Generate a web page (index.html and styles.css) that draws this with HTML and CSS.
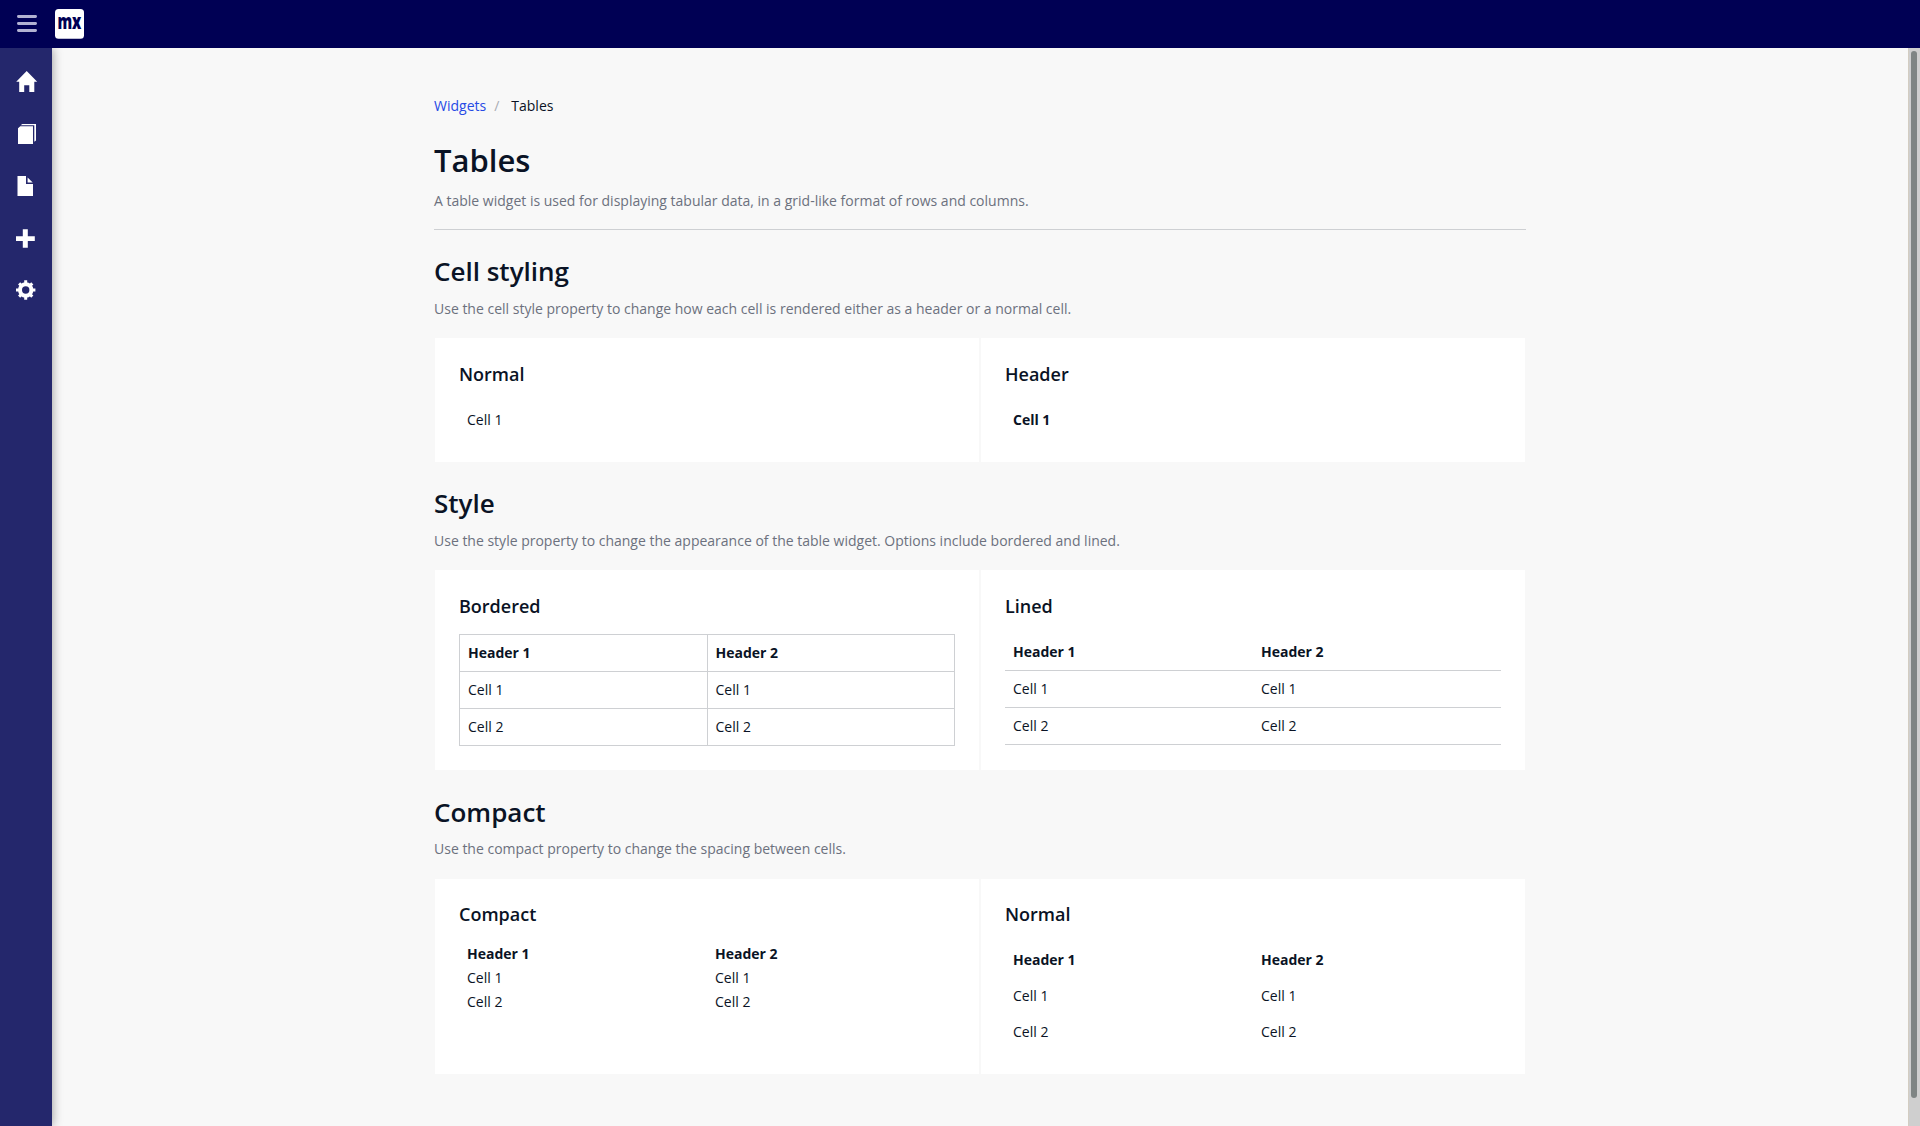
FILE: index.html
```html
<!DOCTYPE html>
<html lang="en">
<head>
<meta charset="utf-8">
<title>Tables</title>
<link rel="stylesheet" href="styles.css">
</head>
<body>
<header class="topbar">
  <svg class="menu-toggle" width="20" height="17" viewBox="0 0 20 17"><path d="M1.4 1.500h17.200M1.400 8.500h17.200M1.400 15.500h17.200" stroke="#b2b2d2" stroke-width="2.8" stroke-linecap="round"/></svg>
  <svg class="logo" width="29" height="30" viewBox="0 0 29 30"><rect width="29" height="29.7" rx="3.5" fill="#fff"/><text x="2.400" y="20.300" class="logo-text" textLength="24" lengthAdjust="spacingAndGlyphs">mx</text></svg>
</header>
<div class="layout">
  <nav class="sidebar">
    <svg width="22" height="22" viewBox="0 0 22 22"><path d="M10.700 0 21.200 10.800H18.300V21h-5v-6.800H8.200V21H3.200V10.800H.2z"/></svg>
    <svg width="22" height="22" viewBox="0 0 22 22"><path d="M4.300 3.300H17v17.700H2V5.300zM4.600 2.300 6.300 1H20V17.500l-1.700 1.300V2.300z"/></svg>
    <svg width="22" height="22" viewBox="0 0 22 22"><path d="M1.500 1H10v8h7v12H1.500zM11.600 2.500 16.700 7.600h-5.100z"/></svg>
    <svg width="22" height="22" viewBox="0 0 22 22"><path d="M6.800 2.200h5v7h7v4.900h-7v6.700h-5v-6.700H0V9.200h6.800z"/></svg>
    <svg width="22" height="22" viewBox="0 0 22 22"><circle cx="9.700" cy="11" r="5.700" fill="none" stroke="#fff" stroke-width="4"/><path d="M9.700 1.200v3M9.700 17.800v3M0 11h3M16.400 11h3M3.100 4.400l2 2M14.300 15.600l2 2M16.300 4.400l-2 2M5.100 15.600l-2 2" stroke="#fff" stroke-width="3"/></svg>
  </nav>
  <main class="content">
    <div class="page">
      <div class="breadcrumb"><a class="crumb-link">Widgets</a><span class="crumb-separator">/</span><span>Tables</span></div>
      <h1 class="page-title">Tables</h1>
      <p class="description">A table widget is used for displaying tabular data, in a grid-like format of rows and columns.</p>
      <hr class="rule">

      <h2 class="section-title">Cell styling</h2>
      <p class="description">Use the cell style property to change how each cell is rendered either as a header or a normal cell.</p>
      <div class="cards">
        <section class="card">
          <h4 class="card-title">Normal</h4>
          <table class="table"><tr><td>Cell 1</td></tr></table>
        </section>
        <section class="card">
          <h4 class="card-title">Header</h4>
          <table class="table"><tr><th>Cell 1</th></tr></table>
        </section>
      </div>

      <h2 class="section-title">Style</h2>
      <p class="description">Use the style property to change the appearance of the table widget. Options include bordered and lined.</p>
      <div class="cards">
        <section class="card">
          <h4 class="card-title">Bordered</h4>
          <table class="table table-bordered">
            <tr><th>Header 1</th><th>Header 2</th></tr>
            <tr><td>Cell 1</td><td>Cell 1</td></tr>
            <tr><td>Cell 2</td><td>Cell 2</td></tr>
          </table>
        </section>
        <section class="card">
          <h4 class="card-title">Lined</h4>
          <table class="table table-lined">
            <tr><th>Header 1</th><th>Header 2</th></tr>
            <tr><td>Cell 1</td><td>Cell 1</td></tr>
            <tr><td>Cell 2</td><td>Cell 2</td></tr>
          </table>
        </section>
      </div>

      <h2 class="section-title">Compact</h2>
      <p class="description">Use the compact property to change the spacing between cells.</p>
      <div class="cards">
        <section class="card">
          <h4 class="card-title">Compact</h4>
          <table class="table table-compact">
            <tr><th>Header 1</th><th>Header 2</th></tr>
            <tr><td>Cell 1</td><td>Cell 1</td></tr>
            <tr><td>Cell 2</td><td>Cell 2</td></tr>
          </table>
        </section>
        <section class="card">
          <h4 class="card-title">Normal</h4>
          <table class="table">
            <tr><th>Header 1</th><th>Header 2</th></tr>
            <tr><td>Cell 1</td><td>Cell 1</td></tr>
            <tr><td>Cell 2</td><td>Cell 2</td></tr>
          </table>
        </section>
      </div>
    </div>
  </main>
  <div class="scrollbar"><div class="scrollbar-thumb"></div></div>
</div>
</body>
</html>
```
FILE: styles.css
```css
* { box-sizing: border-box; }

body {
  margin: 0;
  height: 1126px;
  display: flex;
  flex-direction: column;
  overflow: hidden;
  background: #f8f8f8;
  color: #0a1325;
  font: 14px/20px "Open Sans", sans-serif;
}

h1, h2, h4, p { margin: 0; }

.topbar {
  flex: none;
  height: 48px;
  display: flex;
  align-items: flex-start;
  gap: 18px;
  padding: 9px 17px;
  background: #000054;
}
.menu-toggle { margin-top: 5.5px; }
.logo { overflow: visible; }
.logo-text {
  font: 800 20.5px "Open Sans", sans-serif;
  fill: #000054;
}

.layout { flex: 1; min-height: 0; display: flex; }

.sidebar {
  flex: none;
  z-index: 1;
  width: 52px;
  display: flex;
  flex-direction: column;
  gap: 30px;
  padding: 23px 16px;
  background: #24276c;
  box-shadow: 0 0 10px rgba(0, 0, 0, .4);
  clip-path: inset(0 -20px 0 0);
}
.sidebar svg { flex: none; fill: #fff; }

.content {
  flex: 1;
  min-width: 0;
  padding: 48px 0 0 382px;
}
.page { width: 1092px; }

.breadcrumb { display: flex; }
.crumb-link { color: #264ae5; }
.crumb-separator { margin: 0 12px 0 8px; color: #a9acb3; }

.page-title {
  margin: 23.7px 0 11px;
  font-size: 31px;
  font-weight: 600;
  line-height: 40.3px;
}
.description { color: #6c717e; }

.rule {
  height: 1px;
  margin: 18.4px 0 0;
  border: 0;
  background: #ced0d3;
}

.section-title {
  margin: 24.8px 0 9.6px;
  font-size: 26px;
  font-weight: 600;
  line-height: 33.8px;
}

.cards { display: flex; margin-top: 18.6px; }
.card {
  flex: 1;
  padding: 24.4px 24px 24px;
  background: #fff;
  border: 1px solid #f8f8f8;
}
.card-title {
  margin-bottom: 15.6px;
  font-size: 18px;
  font-weight: 600;
  line-height: 23.4px;
}

.table {
  width: 100%;
  table-layout: fixed;
  border-collapse: collapse;
}
.table th, .table td {
  padding: 8px;
  text-align: left;
}
.table th { font-weight: 700; }
.table-bordered th, .table-bordered td { border: 1px solid #ced0d3; }
.table-lined tr { border-bottom: 1px solid #ced0d3; }
.table-compact th, .table-compact td { padding-top: 2px; padding-bottom: 2px; }

.scrollbar {
  flex: none;
  width: 12px;
  padding: 3px 3px 28px 2px;
  background: #cfcfcf;
  border-left: 1px solid #d3cdc2;
}
.scrollbar-thumb {
  width: 6px;
  height: 100%;
  border-radius: 3px;
  background: #7f8584;
}
```
